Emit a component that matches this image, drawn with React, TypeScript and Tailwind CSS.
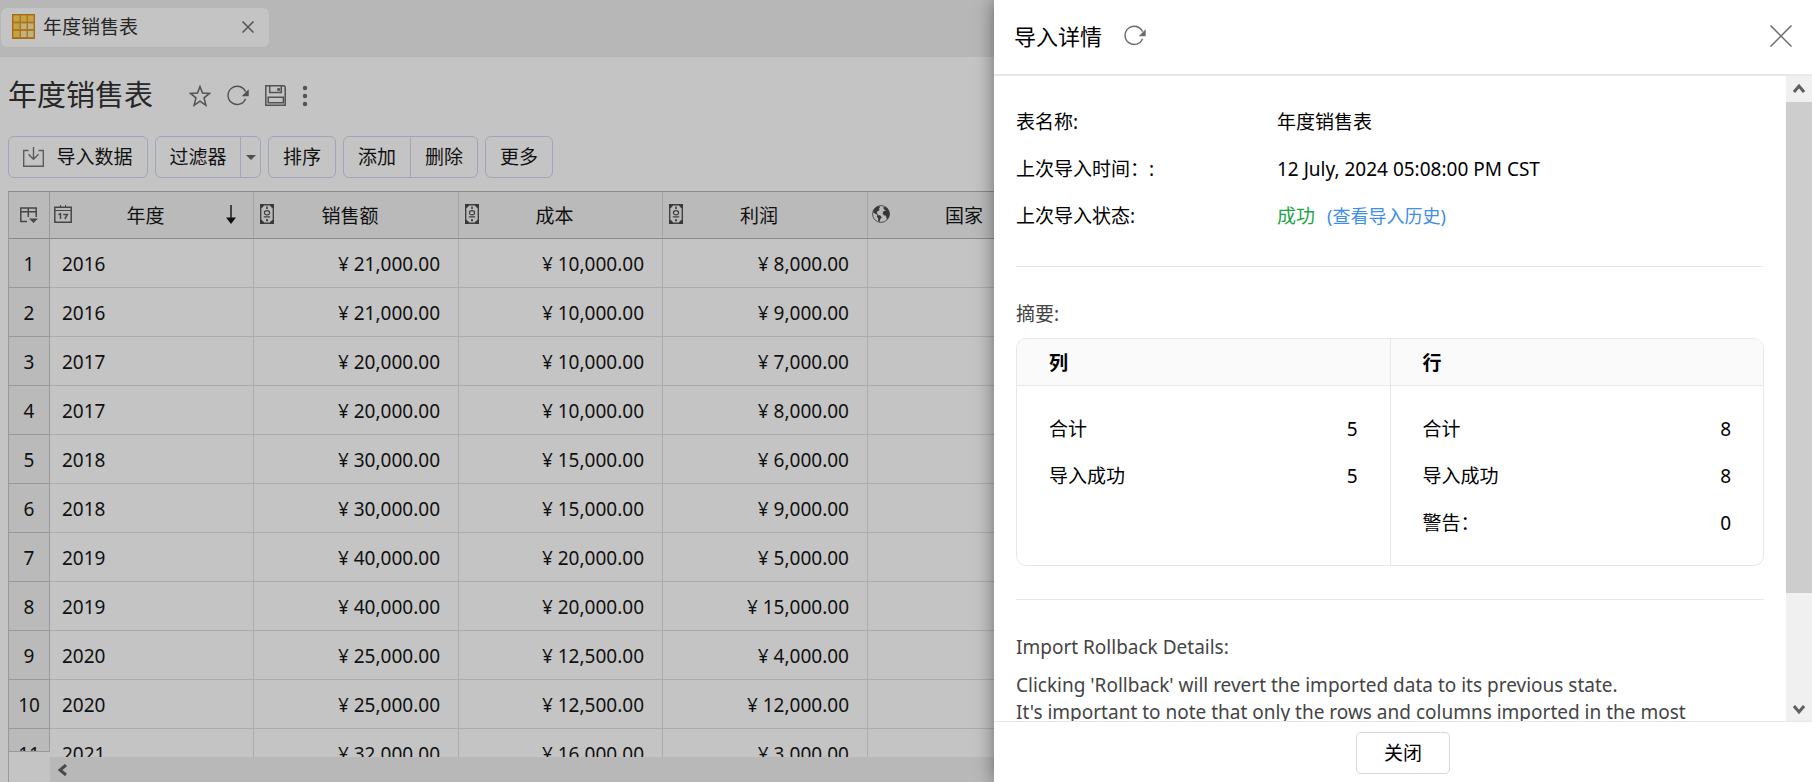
import React from "react";

const FONT = "font-['Noto_Sans','Noto_Sans_CJK_SC',sans-serif]";

const rows: [string, string, string, string][] = [
  ["2016", "21,000.00", "10,000.00", "8,000.00"],
  ["2016", "21,000.00", "10,000.00", "9,000.00"],
  ["2017", "20,000.00", "10,000.00", "7,000.00"],
  ["2017", "20,000.00", "10,000.00", "8,000.00"],
  ["2018", "30,000.00", "15,000.00", "6,000.00"],
  ["2018", "30,000.00", "15,000.00", "9,000.00"],
  ["2019", "40,000.00", "20,000.00", "5,000.00"],
  ["2019", "40,000.00", "20,000.00", "15,000.00"],
  ["2020", "25,000.00", "12,500.00", "4,000.00"],
  ["2020", "25,000.00", "12,500.00", "12,000.00"],
  ["2021", "32,000.00", "16,000.00", "3,000.00"],
];

function GridIcon() {
  return (
    <svg width="23" height="25" viewBox="0 0 23 25" aria-hidden="true">
      <rect width="23" height="25" fill="#e59b2c" />
      <path d="M1.500 1.500h6v6h-6zM9 1.500h5.500v6H9zM16 1.500h5.500v6H16zM1.500 9.500h6v5.500h-6zM1.500 17h6v6h-6z" fill="#ffd45c" />
      <path d="M9 9.500h5.500V15H9zM16 9.500h5.500V15H16zM9 17h5.500v6H9zM16 17h5.500v6H16z" fill="#fbe9a8" />
      <path d="M.5.5h22v24H.5z" fill="none" stroke="#d88a1c" />
    </svg>
  );
}

function StarIcon() {
  return (
    <svg width="22" height="22" viewBox="0 0 22 22" fill="none" stroke="#6b6b6b" strokeWidth="1.5" aria-hidden="true">
      <path d="M11 1.500l2.500 6.600 7 .3-5.500 4.400 1.900 7.500L11 16.200l-5.900 4.100 1.900-7.500L1.500 8.400l7-.3z" />
    </svg>
  );
}

function RefreshIcon() {
  return (
    <svg width="22" height="22" viewBox="0 0 22 22" aria-hidden="true">
      <path d="M18.500 6.700A9.100 9.100 0 1 0 18.600 13.700" fill="none" stroke="#6b6b6b" strokeWidth="1.400" />
      <path d="M21.700 4.200v7h-7z" fill="#6b6b6b" />
    </svg>
  );
}

function SaveIcon() {
  return (
    <svg width="21" height="21" viewBox="0 0 21 21" fill="none" stroke="#6b6b6b" strokeWidth="1.500" aria-hidden="true">
      <path d="M.8.800h18.200l1.200 1.200v18.200H.8z" />
      <path d="M4.700 1v6.500h11.600V1M3.200 12.200h15.200v5.600H3.200z" />
      <path d="M12.200 3.200h3v2.600h-3z" fill="#6b6b6b" stroke="none" />
    </svg>
  );
}

function DotsIcon() {
  return (
    <svg width="6" height="22" viewBox="0 0 6 22" fill="#6b6b6b" aria-hidden="true">
      <circle cx="3" cy="3" r="2.200" />
      <circle cx="3" cy="11" r="2.200" />
      <circle cx="3" cy="19" r="2.200" />
    </svg>
  );
}

function ImportIcon() {
  return (
    <svg width="21" height="20" viewBox="0 0 21 20" fill="none" stroke="#777" strokeWidth="1.400" aria-hidden="true">
      <path d="M5.500 3.500H.7v15.700h19.600V3.500h-4.800M10.500 0v12.200M5.500 7.200l5 5 5-5" />
    </svg>
  );
}

function CornerIcon() {
  return (
    <svg width="18" height="17" viewBox="0 0 18 17" fill="none" stroke="#5c5c5c" strokeWidth="1.500" aria-hidden="true">
      <path d="M7 14.500H.8V1h15.400v9M1 4.700h15M8.300 1v9" />
      <path d="M9 11.500h9L13.500 16z" fill="#5c5c5c" stroke="none" />
    </svg>
  );
}

function DateIcon() {
  return (
    <svg width="18" height="18" viewBox="0 0 18 18" fill="none" stroke="#5c5c5c" aria-hidden="true">
      <path d="M.8 2.300h16.400v14.900H.8z" strokeWidth="1.500" />
      <path d="M1 5.500h16M6.500 0v2.500M11.500 0v2.500" />
      <path d="M4.500 9.700L6.500 8.700V14M9.200 9.500h4.200l-2.600 4.500" strokeWidth="1.500" />
    </svg>
  );
}

function MoneyIcon() {
  return (
    <svg width="14" height="20" viewBox="0 0 14 20" aria-hidden="true">
      <path d="M.7.700h12.600v18.600H.7z" fill="none" stroke="#555" strokeWidth="1.400" />
      <path d="M0 0h4.200A4.200 4.200 0 0 1 0 4.200zM14 0v4.200A4.200 4.200 0 0 1 9.800 0zM0 20v-4.200A4.200 4.200 0 0 1 4.200 20zM14 20H9.800A4.200 4.200 0 0 1 14 15.800z" fill="#4a4a4a" />
      <ellipse cx="7" cy="8.700" rx="2.600" ry="2.100" fill="none" stroke="#555" strokeWidth="1.200" />
      <path d="M6.200 2.500h1.600V5H6.200zM6 15.300h2v2H6zM3.800 12.300h6.400v1.200H3.800z" fill="#555" />
    </svg>
  );
}

function GlobeIcon() {
  return (
    <svg width="18" height="18" viewBox="0 0 18 18" aria-hidden="true">
      <circle cx="9" cy="9" r="8.400" fill="none" stroke="#666" />
      <path d="M1 7.200C1.500 4 4 1.500 7 .9l1 1.600-1.200 1.300 1 1.200-2.300 1.200L4.700 8l1.500 1.500-1 .3L2.800 8.500zM5.600 9.800l3 .9 1.200 1.700-1.400 1.300-.8 3.200-1.300-.7-.2-2.900-1.400-1.800zM11.500 2.200l1.600-.5C16 3.200 17.500 6 17.500 9c0 2-.7 3.700-1.800 5.100l-1.300-.8-.4-2.600-2.200-.5-1.200-2 1-2.100 2.400-.5-1.700-1-.8-.9z" fill="#484848" />
    </svg>
  );
}

function SortArrow() {
  return (
    <svg width="10" height="19" viewBox="0 0 10 19" aria-hidden="true">
      <path d="M4.300 0h1.400v12.500H10L5 19l-5-6.500h4.300z" fill="#161616" />
    </svg>
  );
}

function Chevron({ d, w, h }: { d: string; w: number; h: number }) {
  return (
    <svg width={w} height={h} viewBox={`0 0 ${w} ${h}`} fill="none" stroke="#606060" strokeWidth="3" aria-hidden="true">
      <path d={d} />
    </svg>
  );
}

function HeaderCell({ title, icon, sorted, iconInset = "pl-1" }: { title: string; icon: React.ReactNode; sorted?: boolean; iconInset?: string }) {
  return (
    <th className="relative h-[47px] border-r border-b border-r-[#d4d4d4] border-b-[#b4b4b4] bg-[#f3f3f3] p-0 pt-0.5 pr-3 text-center font-normal">
      {title}
      <span className={`absolute inset-x-0 top-0 bottom-0.5 flex items-center justify-between pr-[17px] ${iconInset}`}>
        {icon}
        {sorted && <SortArrow />}
      </span>
    </th>
  );
}

function Money({ value }: { value: string }) {
  return <td className="border-r border-b border-[#e0e0e0] p-0 pt-0.5 pr-[18px] text-right">¥ {value}</td>;
}

const toolBtn = "flex h-[42px] items-center justify-center border border-[#d0d7ee] bg-white";

function Detail({ label, children }: { label: string; children: React.ReactNode }) {
  return (
    <div className="flex leading-[47px]">
      <dt className="w-[261px] shrink-0">{label}</dt>
      <dd>{children}</dd>
    </div>
  );
}

function SummaryColumn({ title, items }: { title: string; items: [string, string][] }) {
  return (
    <section className="flex-1">
      <h3 className="h-[47px] border-b border-[#e8e8e8] bg-[#fafafa] px-8 leading-[48px] font-bold">{title}</h3>
      <dl className="px-8 pt-5 pb-[18px]">
        {items.map(([k, v]) => (
          <div key={k} className="flex justify-between leading-[47px]">
            <dt>{k}</dt>
            <dd>{v}</dd>
          </div>
        ))}
      </dl>
    </section>
  );
}

export default function App() {
  return (
    <div className={`relative h-screen overflow-hidden bg-white text-[19px] leading-7 text-[#161616] ${FONT}`}>
      <main className="flex h-full flex-col">
        <div className="flex h-[57px] shrink-0 items-start bg-[#eee] px-px pt-2">
          <div className="flex h-[39px] w-[268px] items-center rounded-md bg-white pr-[15px] pb-0.5 pl-[11px]">
            <GridIcon />
            <span className="ml-2 flex-1 text-[#333]">年度销售表</span>
            <button type="button" aria-label="关闭标签" className="flex">
              <svg width="12" height="12" viewBox="0 0 12 12" stroke="#6b6b6b" strokeWidth="1.500" aria-hidden="true">
                <path d="M.5.500l11 11M11.500.500l-11 11" />
              </svg>
            </button>
          </div>
        </div>

        <div className="flex h-[79px] shrink-0 items-center pb-0.5 pl-2">
          <h1 className="pb-0.5 text-[29px] leading-10 text-[#333]">年度销售表</h1>
          <div className="ml-9 flex items-center gap-4">
            <button type="button" aria-label="收藏"><StarIcon /></button>
            <button type="button" aria-label="刷新"><RefreshIcon /></button>
            <button type="button" aria-label="保存"><SaveIcon /></button>
            <button type="button" aria-label="更多选项"><DotsIcon /></button>
          </div>
        </div>

        <div className="flex shrink-0 gap-[7px] pl-2">
          <button type="button" className={`${toolBtn} w-[140px] gap-3 rounded-md`}>
            <ImportIcon />
            导入数据
          </button>
          <div className="flex">
            <button type="button" className={`${toolBtn} w-[86px] rounded-l-md`}>过滤器</button>
            <button type="button" aria-label="过滤器选项" className={`${toolBtn} -ml-px w-[21px] rounded-r-md`}>
              <svg width="10" height="5" viewBox="0 0 10 5" aria-hidden="true"><path d="M0 0h10L5 5z" fill="#666" /></svg>
            </button>
          </div>
          <button type="button" className={`${toolBtn} w-[68px] rounded-md`}>排序</button>
          <div className="flex">
            <button type="button" className={`${toolBtn} w-[68px] rounded-l-md`}>添加</button>
            <button type="button" className={`${toolBtn} -ml-px w-[68px] rounded-r-md`}>删除</button>
          </div>
          <button type="button" className={`${toolBtn} w-[68px] rounded-md`}>更多</button>
        </div>

        <div className="mt-[13px] ml-2 flex min-h-0 flex-1 flex-col border-t border-l border-t-[#b4b4b4] border-l-[#c8c8c8]">
          <div className="min-h-0 flex-1 overflow-hidden">
            <table className="w-full table-fixed border-separate border-spacing-0">
              <colgroup>
                <col className="w-[41px]" />
                <col className="w-[204px]" />
                <col className="w-[205px]" />
                <col className="w-[204px]" />
                <col className="w-[205px]" />
                <col className="w-[205px]" />
                <col />
              </colgroup>
              <thead>
                <tr>
                  <th aria-label="列选项" className="h-[47px] border-r border-b border-r-[#c8c8c8] border-b-[#b4b4b4] bg-[#f3f3f3] p-0">
                    <span className="flex justify-center"><CornerIcon /></span>
                  </th>
                  <HeaderCell title="年度" icon={<DateIcon />} sorted />
                  <HeaderCell title="销售额" icon={<MoneyIcon />} iconInset="pl-1.5" />
                  <HeaderCell title="成本" icon={<MoneyIcon />} iconInset="pl-1.5" />
                  <HeaderCell title="利润" icon={<MoneyIcon />} iconInset="pl-1.5" />
                  <HeaderCell title="国家" icon={<GlobeIcon />} />
                  <td className="border-b border-b-[#b4b4b4] bg-[#f3f3f3]" />
                </tr>
              </thead>
              <tbody>
                {rows.map((r, i) => (
                  <tr key={i} className="h-[49px]">
                    <th className="border-r border-b border-[#c8c8c8] bg-[#f3f3f3] p-0 pt-0.5 text-center font-normal">{i + 1}</th>
                    <td className="border-r border-b border-[#e0e0e0] p-0 pt-0.5 pl-3">{r[0]}</td>
                    <Money value={r[1]} />
                    <Money value={r[2]} />
                    <Money value={r[3]} />
                    <td className="border-r border-b border-[#e0e0e0]" />
                    <td className="border-b border-[#e0e0e0]" />
                  </tr>
                ))}
              </tbody>
            </table>
          </div>
          <div className="z-10 -mt-1.5 flex shrink-0 items-end">
            <div className="h-[31px] w-[41px] border-t border-[#c8c8c8] bg-white" />
            <div className="flex h-[25px] flex-1 items-center bg-[#f0f0f0] pl-[7px]">
              <Chevron d="M9 1L3 6l6 5" w={11} h={12} />
            </div>
          </div>
        </div>
      </main>

      <div className="absolute inset-0 z-20 bg-black/23" />

      <aside
        role="dialog"
        aria-labelledby="drawer-title"
        className="absolute inset-y-0 right-0 z-30 flex w-[818px] max-w-full flex-col bg-white text-black shadow-[0_0_18px_rgba(0,0,0,0.45)]"
      >
        <header className="flex h-[76px] shrink-0 items-center border-b-2 border-[#e8e8e8] pr-5 pb-0.5 pl-5">
          <h2 id="drawer-title" className="text-[22px]">导入详情</h2>
          <button type="button" aria-label="刷新" className="ml-[22px]"><RefreshIcon /></button>
          <button type="button" aria-label="关闭窗口" className="ml-auto">
            <svg width="22" height="22" viewBox="0 0 22 22" stroke="#6b6b6b" strokeWidth="1.500" aria-hidden="true">
              <path d="M.5.500l21 21M21.500.500l-21 21" />
            </svg>
          </button>
        </header>

        <div className="flex min-h-0 flex-1">
          <div className="min-w-0 flex-1 overflow-hidden px-[22px]">
            <dl className="border-b border-[#e8e8e8] pt-[23px] pb-[26px]">
              <Detail label="表名称:">年度销售表</Detail>
              <Detail label="上次导入时间：:">12 July, 2024 05:08:00 PM CST</Detail>
              <Detail label="上次导入状态:">
                <span className="text-[#1ea446]">成功</span>
                <a href="#history" className="ml-3 text-[18px] text-[#408dea]">(查看导入历史)</a>
              </Detail>
            </dl>

            <section className="border-b border-[#e8e8e8] pt-[33px] pb-[33px]">
              <h3 className="text-[#444]">摘要:</h3>
              <div className="mt-2.5 flex divide-x divide-[#e8e8e8] overflow-hidden rounded-[10px] border border-[#e8e8e8]">
                <SummaryColumn title="列" items={[["合计", "5"], ["导入成功", "5"]]} />
                <SummaryColumn title="行" items={[["合计", "8"], ["导入成功", "8"], ["警告：", "0"]]} />
              </div>
            </section>

            <section className="pt-[33px] text-[#444]">
              <h3>Import Rollback Details:</h3>
              <p className="mt-[11px] leading-[27px]">
                Clicking 'Rollback' will revert the imported data to its previous state.
                <br />
                It's important to note that only the rows and columns imported in the most
              </p>
            </section>
          </div>
          <div className="flex w-[26px] shrink-0 flex-col items-center bg-[#f0f0f0]">
            <div className="flex h-[26px] items-center">
              <Chevron d="M1 9l5-6 5 6" w={12} h={12} />
            </div>
            <div className="w-full flex-1 bg-[#cdcdcd]" />
            <div className="flex h-[128px] items-end pb-1.5">
              <Chevron d="M1 3l5 6 5-6" w={12} h={12} />
            </div>
          </div>
        </div>

        <footer className="flex h-[61px] shrink-0 items-center justify-center border-t border-[#e8e8e8] bg-white pt-0.5">
          <button type="button" className="h-[42px] w-[94px] rounded-[5px] border border-[#d8d8d8]">关闭</button>
        </footer>
      </aside>
    </div>
  );
}
